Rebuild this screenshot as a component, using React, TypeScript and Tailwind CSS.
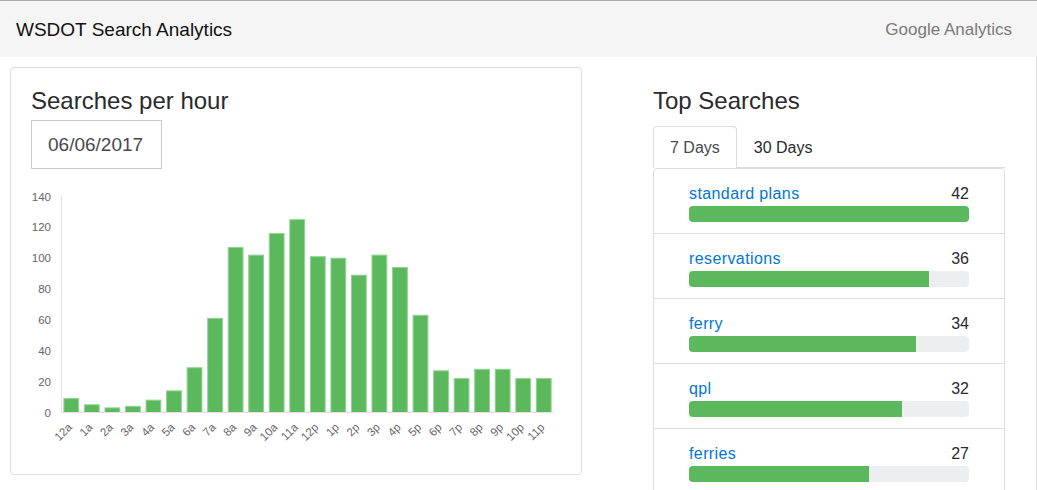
import React from "react";

const data = [9, 5, 3, 4, 8, 14, 29, 61, 107, 102, 116, 125, 101, 100, 89, 102, 94, 63, 27, 22, 28, 28, 22, 22];
const labels = [
  "12a", "1a", "2a", "3a", "4a", "5a", "6a", "7a", "8a", "9a", "10a", "11a",
  "12p", "1p", "2p", "3p", "4p", "5p", "6p", "7p", "8p", "9p", "10p", "11p",
];

const searches = [
  { term: "standard plans", count: 42 },
  { term: "reservations", count: 36 },
  { term: "ferry", count: 34 },
  { term: "qpl", count: 32 },
  { term: "ferries", count: 27 },
];

function Chart() {
  const y0 = 232.5;
  const k = 216 / 140;
  const x0 = 30;
  const step = 493 / 24;
  const bw = 14.8;
  const ticks = [0, 20, 40, 60, 80, 100, 120, 140];
  return (
    <svg width={530} height={280} className="block mt-[11px]">
      {ticks.map((t) => (
        <text
          key={t}
          x={20}
          y={y0 - t * k + 4}
          textAnchor="end"
          fontSize={11.5}
          fill="#666666"
          fontFamily="'Liberation Sans', Arial, sans-serif"
        >
          {t}
        </text>
      ))}
      <line x1={30.5} y1={16} x2={30.5} y2={y0} stroke="#e2e2e2" strokeWidth={1} />
      {data.map((v, i) => {
        const cx = x0 + step * (i + 0.5);
        const h = v * k;
        return (
          <rect
            key={i}
            x={cx - bw / 2}
            y={y0 - h}
            width={bw}
            height={h}
            fill="#5cb85c"
            stroke="#92d392"
            strokeWidth={1}
          />
        );
      })}
      <line x1={30} y1={y0} x2={523} y2={y0} stroke="#e2e2e2" strokeWidth={1} />
      {labels.map((l, i) => {
        const cx = x0 + step * (i + 0.5) + 1.5;
        const y = 248;
        return (
          <text
            key={l}
            x={cx}
            y={y}
            textAnchor="end"
            fontSize={11.5}
            fill="#666666"
            fontFamily="'Liberation Sans', Arial, sans-serif"
            transform={`rotate(-45 ${cx} ${y})`}
          >
            {l}
          </text>
        );
      })}
    </svg>
  );
}

export default function App() {
  const max = 42;
  return (
    <div className="w-[1037px] h-[490px] overflow-hidden bg-white font-['Liberation_Sans',Arial,sans-serif]">
      <nav className="flex items-center justify-between h-[57px] border-t border-[#a9a9a9] bg-[#f5f5f5] pl-[16px] pr-[25px]">
        <span className="text-[19px] leading-[28px] pt-px text-[#111111]">WSDOT Search Analytics</span>
        <span className="text-[17px] leading-[24px] pt-px text-[#7a7a7a]">Google Analytics</span>
      </nav>
      <div className="flex items-start pt-[10px] h-[433px] border-r border-[#e2e2e2]">
        <div className="ml-[10px] w-[572px] h-[408px] shrink-0 border border-[#dddddd] rounded-[4px] px-[20px] pt-[19px]">
          <h2 className="text-[24px] leading-[28px] text-[#292b2c]">Searches per hour</h2>
          <div className="mt-[5px] w-[131px] h-[49px] border border-[#cccccc] pl-[16px] pt-[10px] text-[19px] leading-[27px] text-[#464a4c]">
            06/06/2017
          </div>
          <Chart />
        </div>
        <div className="ml-[71px] w-[352px] shrink-0 pt-[20px]">
          <h2 className="text-[24px] leading-[28px] text-[#292b2c]">Top Searches</h2>
          <div className="mt-[11px] flex border-b border-[#dddddd]">
            <div className="-mb-px px-[16px] pt-[9px] pb-[8px] text-[16px] leading-[24px] text-[#464a4c] bg-white border-x border-t border-[#dddddd] rounded-t-[4px]">
              7 Days
            </div>
            <div className="-mb-px px-[16px] pt-[9px] pb-[8px] text-[16px] leading-[24px] text-[#292b2c] border-x border-t border-transparent">
              30 Days
            </div>
          </div>
          <div className="border border-[#dddddd] rounded-[4px] divide-y divide-[#dddddd]">
            {searches.map((s) => (
              <div key={s.term} className="px-[35px] pt-[13px] pb-[11px]">
                <div className="flex justify-between text-[16px] leading-[24px]">
                  <a className="text-[#0275d8] tracking-[0.4px]">{s.term}</a>
                  <span className="text-[#292b2c]">{s.count}</span>
                </div>
                <div className="h-[16px] rounded-[4px] bg-[#eceeef] overflow-hidden">
                  <div className="h-full bg-[#5cb85c]" style={{ width: `${(s.count / max) * 100}%` }} />
                </div>
              </div>
            ))}
          </div>
        </div>
      </div>
    </div>
  );
}
